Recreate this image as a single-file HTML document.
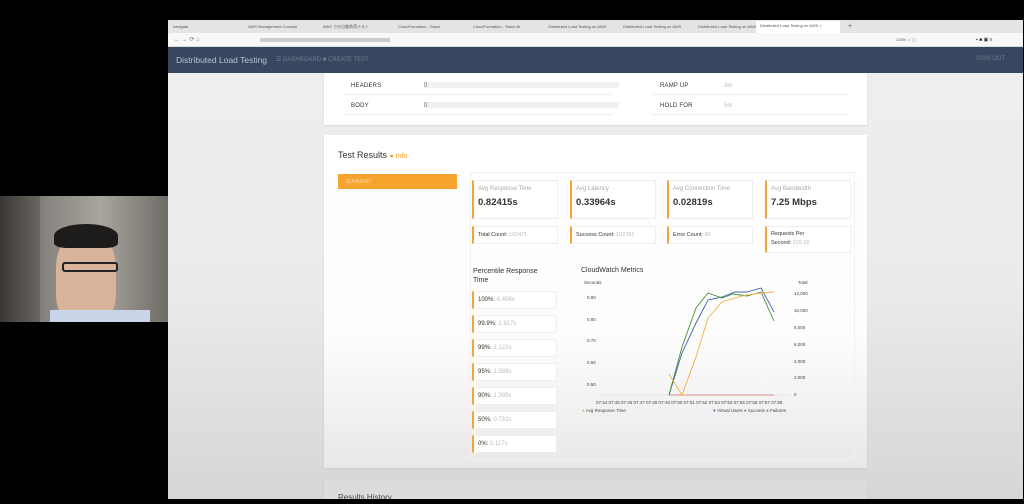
<!DOCTYPE html>
<html><head><meta charset="utf-8"><style>
*{margin:0;padding:0;box-sizing:border-box}
body{width:1024px;height:504px;background:#000;position:relative;overflow:hidden;font-family:"Liberation Sans",sans-serif}
.a{position:absolute}
.cam{left:0;top:196px;width:168px;height:126px;background:linear-gradient(90deg,#5e5b57 0%,#8a8782 30%,#a8a49e 60%,#6f6b66 100%)}
.br{left:168px;top:20px;width:855px;height:479px;background:#ececec;overflow:hidden}
.tabs{left:0;top:0;width:855px;height:13px;background:#e4e4e6}
.tab{position:absolute;top:2px;height:10px;font-size:4px;color:#555;line-height:10px}
.url{left:0;top:13px;width:855px;height:14px;background:#f8f8f9;border-bottom:1px solid #ddd}
.hdr{left:0;top:27px;width:855px;height:26px;background:#37475f;color:#c8ced8}
.card{background:#fff;box-shadow:0 1px 2px rgba(0,0,0,.08)}
.lbl{font-size:6px;color:#333;letter-spacing:.2px}
.m{position:absolute;background:#fff;border:1px solid #eee;border-left:2px solid #f2a33a}
.m .t{font-size:6px;color:#aaa;position:absolute;left:4px;top:5px}
.m .v{font-size:9.5px;font-weight:bold;color:#333;position:absolute;left:4px;top:16px}
.c{position:absolute;background:#fff;border:1px solid #eee;border-left:2px solid #f2a33a;font-size:5.5px;color:#333;padding:5px 4px}
.c span{color:#bbb}
.p{position:absolute;left:304px;width:85px;height:18px;background:#fff;border:1px solid #eee;border-left:2px solid #f2a33a;font-size:6px;color:#333;padding:5px 4px}
.p span{color:#bbb}
.ax{position:absolute;font-size:4.5px;color:#444}
</style></head><body>
<div class="a cam">
<div class="a" style="left:0;top:0;width:40px;height:126px;background:linear-gradient(90deg,#3a3836,#6a6661)"></div>
<div class="a" style="left:56px;top:36px;width:60px;height:90px;background:#d9b49a;border-radius:40% 40% 30% 30%"></div>
<div class="a" style="left:54px;top:28px;width:64px;height:24px;background:#1e1c1b;border-radius:50% 50% 20% 20%"></div>
<div class="a" style="left:62px;top:66px;width:56px;height:10px;border:2px solid #222;border-radius:3px"></div>
<div class="a" style="left:50px;top:114px;width:100px;height:12px;background:#c9d4e8"></div>
</div>
<div class="a br">
<div class="a tabs">
<div class="tab" style="left:5px">navigate</div>
<div class="tab" style="left:80px">AWS Management Console</div>
<div class="tab" style="left:155px">AWS での分散負荷テスト</div>
<div class="tab" style="left:230px">CloudFormation - Stack</div>
<div class="tab" style="left:305px">CloudFormation - Stack dlt</div>
<div class="tab" style="left:380px">Distributed Load Testing on AWS</div>
<div class="tab" style="left:455px">Distributed Load Testing on AWS</div>
<div class="tab" style="left:530px">Distributed Load Testing on AWS</div>
<div class="tab" style="left:588px;width:84px;background:#fff;padding-left:4px;top:1px;height:12px">Distributed Load Testing on AWS ×</div>
<div class="tab" style="left:680px;font-size:7px">+</div>
</div>
<div class="a url"><div class="a" style="left:6px;top:3px;font-size:6px;color:#777">← → ⟳ ⌂</div>
<div class="a" style="left:92px;top:5px;width:130px;height:4px;background:#ccc"></div>
<div class="a" style="left:728px;top:4px;font-size:4px;color:#555">133% ☆ ▢</div>
<div class="a" style="left:808px;top:4px;font-size:5px;color:#333">▪ ■ ▣ ≡</div></div>
<div class="a hdr"><div class="a" style="left:8px;top:8px;font-size:8.5px;color:#b9c2d0">Distributed Load Testing</div>
<div class="a" style="left:108px;top:9px;font-size:6px;color:#6f7c90">☰ DASHBOARD  ■ CREATE TEST</div>
<div class="a" style="left:808px;top:9px;font-size:6px;color:#6f7c90">SIGN OUT</div></div>
<div class="a" style="left:0;top:53px;width:855px;height:426px;background:linear-gradient(#eeeeee 0%,#ebebeb 50%,#d6d6d6 100%)"></div>
<div class="a card" style="left:156px;top:53px;width:543px;height:52px">
<div class="a lbl" style="left:27px;top:10px">HEADERS</div><div class="a" style="left:100px;top:9px;width:195px;height:6px;background:#f1f1f1;font-size:5px;color:#666">{}</div>
<div class="a" style="left:18px;top:21px;width:270px;height:1px;background:#eee"></div>
<div class="a lbl" style="left:27px;top:30px">BODY</div><div class="a" style="left:100px;top:29px;width:195px;height:6px;background:#f1f1f1;font-size:5px;color:#666">{}</div>
<div class="a" style="left:18px;top:41px;width:270px;height:1px;background:#eee"></div>
<div class="a lbl" style="left:336px;top:10px">RAMP UP</div><div class="a" style="left:400px;top:10px;font-size:6px;color:#bbb">3m</div>
<div class="a lbl" style="left:336px;top:30px">HOLD FOR</div><div class="a" style="left:400px;top:30px;font-size:6px;color:#bbb">5m</div>
<div class="a" style="left:328px;top:21px;width:198px;height:1px;background:#eee"></div>
<div class="a" style="left:328px;top:41px;width:198px;height:1px;background:#eee"></div>
</div>
<div class="a card" style="left:156px;top:115px;width:543px;height:333px;background:linear-gradient(#fff,#fdfdfd 60%,#e8e8e8)">
<div class="a" style="left:14px;top:15px;font-size:9px;color:#333">Test Results <span style="color:#f0a030;font-size:7px">● Info</span></div>
<div class="a" style="left:14px;top:39px;width:119px;height:15px;background:#f6a42d;font-size:5px;color:#fbd9a6;padding:5px 8px">SUMMARY</div>
<div class="a" style="left:146px;top:37px;width:385px;height:288px;border:1px solid #f0f0f0;background:transparent"></div>
</div>
<div class="m" style="left:304px;top:160px;width:86px;height:39px"><div class="t">Avg Response Time</div><div class="v">0.82415s</div></div>
<div class="m" style="left:402px;top:160px;width:86px;height:39px"><div class="t">Avg Latency</div><div class="v">0.33964s</div></div>
<div class="m" style="left:499px;top:160px;width:86px;height:39px"><div class="t">Avg Connection Time</div><div class="v">0.02819s</div></div>
<div class="m" style="left:597px;top:160px;width:86px;height:39px"><div class="t">Avg Bandwidth</div><div class="v">7.25 Mbps</div></div>
<div class="c" style="left:304px;top:206px;width:86px;height:18px">Total Count: <span>102471</span></div>
<div class="c" style="left:402px;top:206px;width:86px;height:18px">Success Count: <span>102391</span></div>
<div class="c" style="left:499px;top:206px;width:86px;height:18px">Error Count: <span>80</span></div>
<div class="c" style="left:597px;top:206px;width:86px;height:27px;line-height:9px;padding-top:3px">Requests Per<br>Second: <span>215.28</span></div>
<div class="a" style="left:305px;top:247px;font-size:7px;color:#333;line-height:9px">Percentile Response<br>Time</div>
<div class="p" style="top:271px">100%: <span>6.406s</span></div>
<div class="p" style="top:295px">99.9%: <span>2.917s</span></div>
<div class="p" style="top:319px">99%: <span>2.122s</span></div>
<div class="p" style="top:343px">95%: <span>1.589s</span></div>
<div class="p" style="top:367px">90%: <span>1.395s</span></div>
<div class="p" style="top:391px">50%: <span>0.732s</span></div>
<div class="p" style="top:415px">0%: <span>0.117s</span></div>
<div class="a" style="left:413px;top:247px;font-size:7px;color:#333">CloudWatch Metrics</div>
<div class="ax" style="left:416px;top:260px">Seconds</div><div class="ax" style="left:630px;top:260px">Total</div>
<div class="ax" style="left:419px;top:275px">0.90</div><div class="ax" style="left:419px;top:297px">0.80</div><div class="ax" style="left:419px;top:318px">0.70</div><div class="ax" style="left:419px;top:340px">0.60</div><div class="ax" style="left:419px;top:362px">0.50</div>
<div class="ax" style="left:626px;top:271px">12,000</div><div class="ax" style="left:626px;top:288px">10,000</div><div class="ax" style="left:626px;top:305px">8,000</div><div class="ax" style="left:626px;top:322px">6,000</div><div class="ax" style="left:626px;top:339px">4,000</div><div class="ax" style="left:626px;top:355px">2,000</div><div class="ax" style="left:626px;top:372px">0</div>
<svg class="a" style="left:428px;top:260px" width="200" height="120" viewBox="428 260 200 120">
<line x1="430" y1="375" x2="622" y2="375" stroke="#ddd" stroke-width=".8"/>
<path d="M501 375 L606 375" stroke="#d9534f" stroke-width="1" fill="none" opacity=".6"/>
<path d="M501 375 L514 333 L528 303 L540 280 L554 277 L567 272 L579 272 L593 268 L606 292" stroke="#3a67a8" stroke-width=".9" fill="none"/>
<path d="M501 375 L514 327 L528 288 L540 273 L554 278 L565 274 L579 276 L593 272 L606 301" stroke="#4a8c3a" stroke-width=".9" fill="none"/>
<path d="M501 354 L514 375 L528 337 L540 298 L554 282 L567 278 L579 275 L593 273 L606 272" stroke="#f0b040" stroke-width=".9" fill="none"/>
</svg>
<div class="ax" style="left:428px;top:380px;font-size:4.5px">07:44 07:45 07:46 07:47 07:48 07:49 07:50 07:51 07:52 07:53 07:54 07:55 07:56 07:57 07:58</div>
<div class="ax" style="left:414px;top:388px"><span style="color:#f0b040">●</span> Avg Response Time</div>
<div class="ax" style="left:545px;top:388px"><span style="color:#3a67a8">●</span> Virtual Users <span style="color:#4a8c3a">●</span> Success <span style="color:#d9534f">●</span> Failures</div>
<div class="a card" style="left:156px;top:460px;width:543px;height:40px;background:#dcdcdc"><div class="a" style="left:14px;top:13px;font-size:8px;color:#444">Results History</div></div>
</div>
</body></html>
